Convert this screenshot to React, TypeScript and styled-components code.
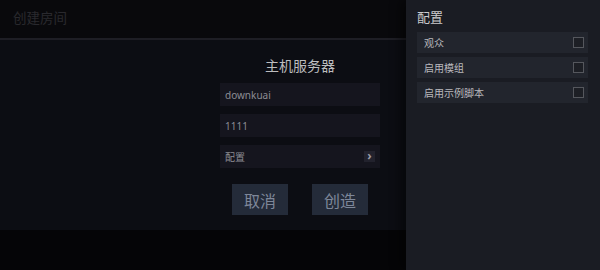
import React from "react";
import styled, { createGlobalStyle } from "styled-components";

const Global = createGlobalStyle`
  html, body { margin: 0; padding: 0; background: #0c0d13; }
  body { font-family: "Noto Sans", "Noto Sans CJK SC", sans-serif; }
  #root { width: 600px; height: 270px; }
`;

const Screen = styled.div`
  position: relative;
  width: 600px;
  height: 270px;
  display: flex;
  flex-direction: column;
  overflow: hidden;
  background: #0c0d13;
`;

const TopBar = styled.div`
  height: 38px;
  flex: none;
  background: #09090c;
  border-bottom: 2px solid #1e1e25;
  display: flex;
  align-items: center;
  padding-left: 13px;
`;

const PageTitle = styled.div`
  font-size: 13.5px;
  color: #29292e;
  margin-top: -4px;
`;

const Content = styled.div`
  flex: 1;
  display: flex;
  flex-direction: column;
  align-items: center;
  padding-top: 16px;
  background: #0c0d13;
`;

const Form = styled.div`
  width: 160px;
  display: flex;
  flex-direction: column;
  gap: 8px;
`;

const FormTitle = styled.div`
  text-align: center;
  font-size: 14px;
  line-height: 20px;
  color: #bdbdbf;
  margin-bottom: -1px;
`;

const Field = styled.div`
  height: 23px;
  background: #15151e;
  display: flex;
  align-items: center;
  justify-content: space-between;
  padding: 0 5px;
  font-size: 10px;
  color: #8c8c94;
`;

const Chevron = styled.div`
  width: 11px;
  height: 11px;
  background: #22222d;
  display: flex;
  align-items: center;
  justify-content: center;
  color: #9a9aa5;
  font-size: 12px;
  font-weight: bold;
  line-height: 1;
  padding-bottom: 1px;
  box-sizing: border-box;
`;

const Buttons = styled.div`
  display: flex;
  gap: 24px;
  margin-top: 16px;
`;

const Button = styled.div`
  width: 56px;
  height: 31px;
  background: #242b39;
  color: #7e8799;
  font-size: 16px;
  display: flex;
  align-items: center;
  justify-content: center;
`;

const BottomBar = styled.div`
  height: 40px;
  flex: none;
  background: #050507;
`;

const Panel = styled.div`
  position: absolute;
  top: 0;
  right: 0;
  width: 194px;
  height: 100%;
  background: #1a1c23;
  box-shadow: -6px 0 10px rgba(0, 0, 0, 0.45);
  padding: 8px 12px 0 11px;
  box-sizing: border-box;
  display: flex;
  flex-direction: column;
  gap: 4px;
`;

const PanelTitle = styled.div`
  font-size: 13px;
  line-height: 18px;
  color: #cacacc;
  margin-bottom: 2px;
`;

const OptionRow = styled.div`
  height: 21px;
  background: #22252d;
  display: flex;
  align-items: center;
  justify-content: space-between;
  padding: 0 4px 0 7px;
  font-size: 10px;
  color: #b9b9bd;
`;

const Box = styled.div`
  width: 9px;
  height: 9px;
  border: 1px solid #55575d;
  background: #1d1f25;
`;

export default function App() {
  return (
    <>
      <Global />
      <Screen>
        <TopBar>
          <PageTitle>创建房间</PageTitle>
        </TopBar>
        <Content>
          <Form>
            <FormTitle>主机服务器</FormTitle>
            <Field>downkuai</Field>
            <Field>1111</Field>
            <Field>
              <span>配置</span>
              <Chevron>›</Chevron>
            </Field>
          </Form>
          <Buttons>
            <Button>取消</Button>
            <Button>创造</Button>
          </Buttons>
        </Content>
        <BottomBar />
        <Panel>
          <PanelTitle>配置</PanelTitle>
          <OptionRow>
            <span>观众</span>
            <Box />
          </OptionRow>
          <OptionRow>
            <span>启用模组</span>
            <Box />
          </OptionRow>
          <OptionRow>
            <span>启用示例脚本</span>
            <Box />
          </OptionRow>
        </Panel>
      </Screen>
    </>
  );
}
